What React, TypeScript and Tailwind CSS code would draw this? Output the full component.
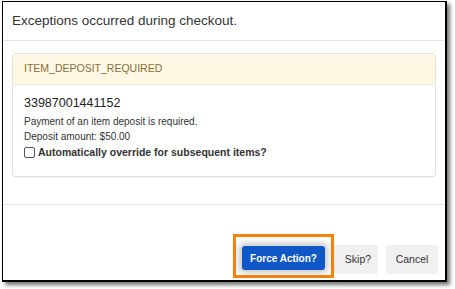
export default function App() {
  return (
    <div className="h-[289px] w-[455px] bg-white pl-[2px] pt-[1px] font-['Liberation_Sans',Arial,sans-serif] text-[#333]">
      <div className="flex h-[281px] w-[445px] flex-col border border-r-2 border-b-2 border-black bg-white shadow-[3px_3px_4px_rgba(0,0,0,0.55)]">
        <div className="flex h-[39px] items-center border-b border-[#e5e5e5] px-[9px]">
          <h4 className="text-[13.5px] leading-none text-[#333]">Exceptions occurred during checkout.</h4>
        </div>

        <div className="px-[9px] pt-[12px] pb-[27px]">
          <div className="rounded-[3px] border border-[#e3e3e3] shadow-[0_1px_1px_rgba(0,0,0,0.05)]">
            <div className="flex h-[31px] items-center rounded-t-[3px] border-b border-[#faebcc] bg-[#fcf8e3] px-[11px] text-[10.5px] text-[#8a6d3b]">
              ITEM_DEPOSIT_REQUIRED
            </div>
            <div className="px-[11px] pt-[9px] pb-[16px]">
              <div className="text-[12.5px] leading-[18px] text-[#222]">33987001441152</div>
              <div className="mt-[2px] text-[10px] leading-[15px]">Payment of an item deposit is required.</div>
              <div className="text-[10px] leading-[15px]">Deposit amount: $50.00</div>
              <label className="flex items-center gap-[3px] text-[10.5px] font-bold leading-[16px]">
                <span className="inline-block h-[11px] w-[11px] rounded-[2px] border border-[#555] bg-white" />
                Automatically override for subsequent items?
              </label>
            </div>
          </div>
        </div>

        <div className="flex flex-1 items-end justify-end gap-[8px] border-t border-[#e5e5e5] px-[7px] pb-[6px]">
          <div className="mb-[-4px] flex h-[44px] w-[101px] items-start justify-center border-[3px] border-[#f7830f] pt-[9px]">
            <button className="h-[24px] w-[83px] rounded-[3px] bg-[#0f57c7] text-[10px] font-bold text-white shadow-[0_0_6px_3px_rgba(0,0,0,0.22)]">
              Force Action?
            </button>
          </div>
          <div className="ml-[-8px] flex items-end gap-[8px]">
            <button className="h-[29px] w-[44px] rounded-[3px] bg-[#f0f0f0] pl-[4px] text-[10.5px] text-[#333]">
              Skip?
            </button>
            <button className="h-[29px] w-[52px] rounded-[3px] bg-[#f0f0f0] text-[10.5px] text-[#333]">
              Cancel
            </button>
          </div>
        </div>
      </div>
    </div>
  );
}
